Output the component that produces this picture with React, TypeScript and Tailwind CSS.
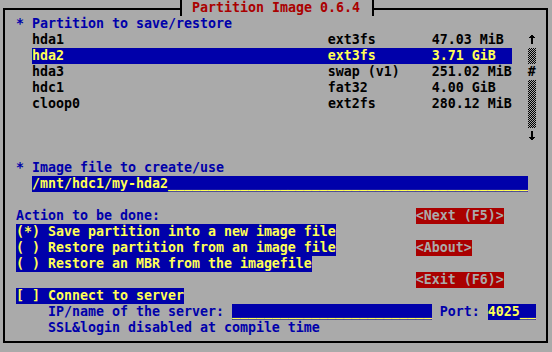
import React from 'react'

type Seg = { c: number; t?: string; k?: string; scroll?: boolean; arrow?: 'up' | 'down' }

const B = 'text-[#0000aa]'
const Y = 'bg-[#0000aa] text-[#ffff55]'
const K = 'text-black'
const R = 'bg-[#aa0000] text-[#aaaaaa]'

const pad = (s: string, n: number) => s + ' '.repeat(Math.max(0, n - s.length))

const rows: Seg[][] = [
  [{ c: 2, t: '* Partition to save/restore', k: B }],
  [{ c: 4, t: 'hda1', k: K }, { c: 41, t: 'ext3fs', k: K }, { c: 54, t: '47.03 MiB', k: K }, { c: 66, arrow: 'up' }],
  [{ c: 4, t: pad('hda2', 37) + pad('ext3fs', 13) + pad('3.71 GiB', 10), k: Y }, { c: 66, scroll: true }],
  [{ c: 4, t: 'hda3', k: K }, { c: 41, t: 'swap (v1)', k: K }, { c: 54, t: '251.02 MiB', k: K }, { c: 66, t: '#', k: K }],
  [{ c: 4, t: 'hdc1', k: K }, { c: 41, t: 'fat32', k: K }, { c: 54, t: '4.00 GiB', k: K }, { c: 66, scroll: true }],
  [{ c: 4, t: 'cloop0', k: K }, { c: 41, t: 'ext2fs', k: K }, { c: 54, t: '280.12 MiB', k: K }, { c: 66, scroll: true }],
  [{ c: 66, scroll: true }],
  [{ c: 66, arrow: 'down' }],
  [],
  [{ c: 2, t: '* Image file to create/use', k: B }],
  [{ c: 4, t: '/mnt/hdc1/my-hda2' + '_'.repeat(45), k: Y }],
  [],
  [{ c: 2, t: 'Action to be done:', k: B }, { c: 52, t: '<Next (F5)>', k: R }],
  [{ c: 2, t: '(*) Save partition into a new image file', k: Y }],
  [{ c: 2, t: '( ) Restore partition from an image file', k: Y }, { c: 52, t: '<About>', k: R }],
  [{ c: 2, t: '( ) Restore an MBR from the imagefile', k: Y }],
  [{ c: 52, t: '<Exit (F6)>', k: R }],
  [{ c: 2, t: '[ ] Connect to server', k: Y }],
  [{ c: 6, t: 'IP/name of the server:', k: B }, { c: 29, t: '_'.repeat(25), k: Y }, { c: 55, t: 'Port:', k: B }, { c: 61, t: '4025__', k: Y }],
  [{ c: 6, t: 'SSL&login disabled at compile time', k: B }],
]

function Arrow({ dir }: { dir: 'up' | 'down' }) {
  return (
    <svg width="8" height="16" viewBox="0 0 8 16" className="inline-block align-top">
      {dir === 'up' ? (
        <path d="M3 3h2v1h1v1h1v1H5v6H3V6H1V5h1V4h1z" fill="#000" />
      ) : (
        <path d="M3 3h2v6h2v1H6v1H5v1H3v-1H2v-1H1V9h2z" fill="#000" />
      )}
    </svg>
  )
}

function Row({ segs }: { segs: Seg[] }) {
  let col = 1
  const out: React.ReactNode[] = []
  segs.forEach((s, i) => {
    if (s.c > col) out.push(<span key={'g' + i} className="inline-block h-4 align-top">{' '.repeat(s.c - col)}</span>)
    if (s.scroll) {
      out.push(
        <span
          key={i}
          className="inline-block w-2 h-4 align-top bg-[image:repeating-conic-gradient(#000_0%_25%,#aaaaaa_0%_50%)] bg-[length:2px_2px]"
        />
      )
      col = s.c + 1
    } else if (s.arrow) {
      out.push(<Arrow key={i} dir={s.arrow} />)
      col = s.c + 1
    } else {
      out.push(<span key={i} className={'inline-block h-4 align-top ' + s.k}>{s.t}</span>)
      col = s.c + (s.t?.length ?? 0)
    }
  })
  return <div className="h-4 leading-4 whitespace-pre">{out}</div>
}

export default function App() {
  return (
    <div className="w-[552px] h-[352px] bg-[#aaaaaa] overflow-hidden pt-[8px] font-['DejaVu_Sans_Mono','Liberation_Mono',monospace] text-[13.29px] font-bold">
      <div className="relative ml-[3px] w-[545px] h-[335px] border-2 border-black pt-[6px] pl-[3px]">
        {/* window title */}
        <div className="absolute left-[175px] -top-[10px] w-[194px] h-4 leading-4 bg-[#aaaaaa] border-x-2 border-black pl-[2px] whitespace-pre text-[#aa0000]">
          {' Partition Image 0.6.4 '}
        </div>
        {rows.map((r, i) => (
          <Row key={i} segs={r} />
        ))}
      </div>
    </div>
  )
}
